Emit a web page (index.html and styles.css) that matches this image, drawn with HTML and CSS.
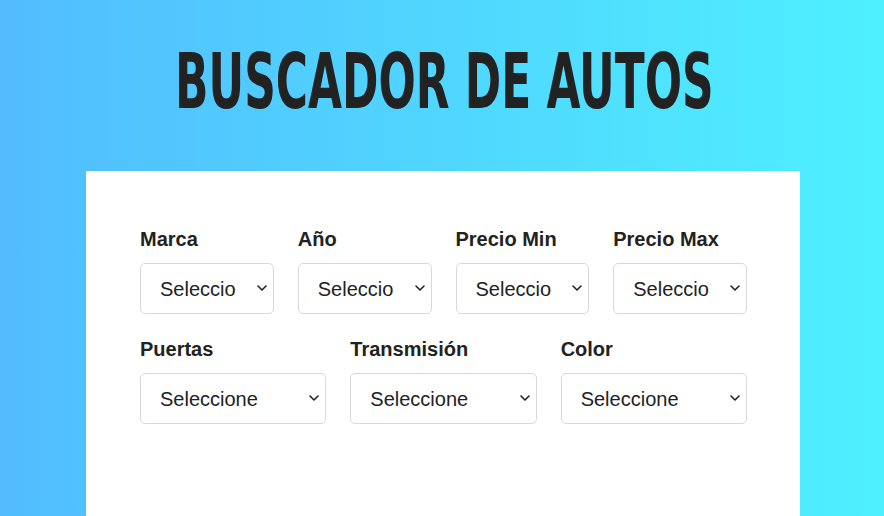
FILE: index.html
```html
<!DOCTYPE html>
<html lang="es">
<head>
<meta charset="utf-8">
<title>Buscador de Autos</title>
<link rel="stylesheet" href="styles.css">
</head>
<body>
<header class="header">
  <h1 class="title">Buscador de Autos</h1>
</header>
<main class="card">
  <form class="form">
    <div class="row">
      <div class="field">
        <label class="label" for="marca">Marca</label>
        <div class="select-wrap">
          <select class="select" id="marca"><option>Seleccione</option></select>
          <svg class="chevron" viewBox="0 0 10 6" aria-hidden="true"><path d="M1 1l4 4 4-4"/></svg>
        </div>
      </div>
      <div class="field">
        <label class="label" for="year">Año</label>
        <div class="select-wrap">
          <select class="select" id="year"><option>Seleccione</option></select>
          <svg class="chevron" viewBox="0 0 10 6" aria-hidden="true"><path d="M1 1l4 4 4-4"/></svg>
        </div>
      </div>
      <div class="field">
        <label class="label" for="minimo">Precio Min</label>
        <div class="select-wrap">
          <select class="select" id="minimo"><option>Seleccione</option></select>
          <svg class="chevron" viewBox="0 0 10 6" aria-hidden="true"><path d="M1 1l4 4 4-4"/></svg>
        </div>
      </div>
      <div class="field">
        <label class="label" for="maximo">Precio Max</label>
        <div class="select-wrap">
          <select class="select" id="maximo"><option>Seleccione</option></select>
          <svg class="chevron" viewBox="0 0 10 6" aria-hidden="true"><path d="M1 1l4 4 4-4"/></svg>
        </div>
      </div>
    </div>
    <div class="row">
      <div class="field">
        <label class="label" for="puertas">Puertas</label>
        <div class="select-wrap">
          <select class="select" id="puertas"><option>Seleccione</option></select>
          <svg class="chevron" viewBox="0 0 10 6" aria-hidden="true"><path d="M1 1l4 4 4-4"/></svg>
        </div>
      </div>
      <div class="field">
        <label class="label" for="transmision">Transmisión</label>
        <div class="select-wrap">
          <select class="select" id="transmision"><option>Seleccione</option></select>
          <svg class="chevron" viewBox="0 0 10 6" aria-hidden="true"><path d="M1 1l4 4 4-4"/></svg>
        </div>
      </div>
      <div class="field">
        <label class="label" for="color">Color</label>
        <div class="select-wrap">
          <select class="select" id="color"><option>Seleccione</option></select>
          <svg class="chevron" viewBox="0 0 10 6" aria-hidden="true"><path d="M1 1l4 4 4-4"/></svg>
        </div>
      </div>
    </div>
  </form>
</main>
</body>
</html>
```
FILE: styles.css
```css
html, body {
  margin: 0;
  padding: 0;
}
body {
  min-height: 100vh;
  background: linear-gradient(to right, #52bcfe, #4ef0ff);
  font-family: "Liberation Sans", Arial, sans-serif;
  color: #222;
  overflow: hidden;
}
.header {
  padding: 43px 0 51px;
  text-align: center;
}
.title {
  display: inline-block;
  margin: 0 0 0 4px;
  font-family: "DejaVu Sans Condensed", "DejaVu Sans", sans-serif;
  font-weight: bold;
  font-size: 76px;
  line-height: 77px;
  height: 77px;
  text-transform: uppercase;
  color: #222;
  white-space: nowrap;
  transform: scaleX(0.642);
  transform-origin: center;
}
.card {
  width: 714px;
  margin: 0 0 0 86px;
  box-sizing: border-box;
  background: #fff;
  min-height: 400px;
  padding: 57px 53px 60px 54px;
}
.form {
  display: flex;
  flex-direction: column;
  gap: 24px;
}
.row {
  display: flex;
  gap: 24px;
}
.field {
  flex: 1;
  min-width: 0;
}
.label {
  display: block;
  font-weight: bold;
  font-size: 20px;
  line-height: 23px;
  margin-bottom: 12px;
  color: #222;
}
.select-wrap {
  position: relative;
}
.select {
  display: block;
  width: 100%;
  height: 51px;
  box-sizing: border-box;
  padding: 0 37px 0 19px;
  appearance: none;
  -webkit-appearance: none;
  font-family: "Liberation Sans", Arial, sans-serif;
  font-size: 20px;
  color: #222;
  background: #fff;
  border: 1px solid #d9d9d9;
  border-radius: 5px;
  overflow: hidden;
  white-space: nowrap;
}
.chevron {
  position: absolute;
  right: 7px;
  top: 22px;
  width: 10px;
  height: 6px;
  fill: none;
  stroke: #222;
  stroke-width: 1.6;
  stroke-linecap: round;
  stroke-linejoin: round;
  pointer-events: none;
}
```
